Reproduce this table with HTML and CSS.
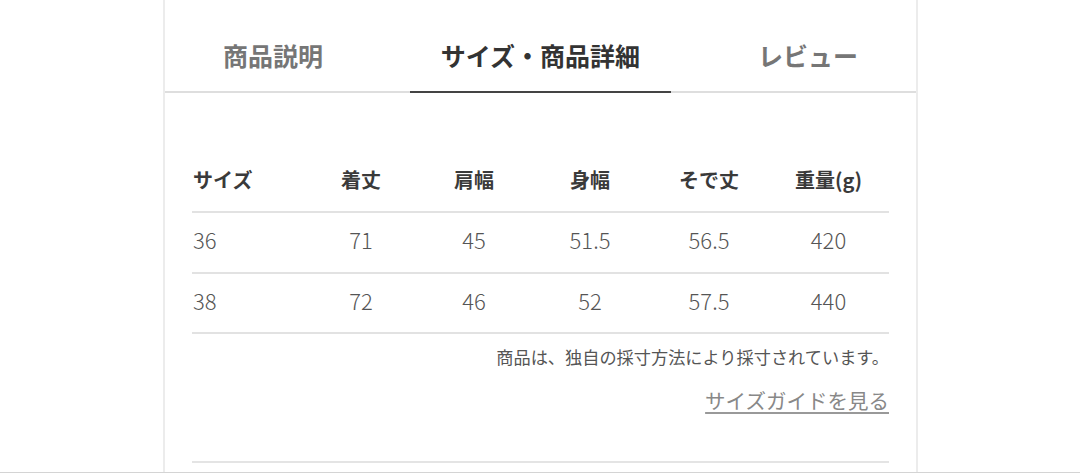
FILE: index.html
```html
<!DOCTYPE html>
<html lang="ja">
<head>
<meta charset="utf-8">
<title>サイズ・商品詳細</title>
<link rel="stylesheet" href="styles.css">
</head>
<body>
<div class="page">
  <section class="panel">
    <nav class="tabs">
      <a class="tab">商品説明</a>
      <a class="tab active">サイズ・商品詳細</a>
      <a class="tab">レビュー</a>
    </nav>
    <div class="content">
      <div class="size-table">
        <div class="row head">
          <div class="cell first">サイズ</div>
          <div class="cell">着丈</div>
          <div class="cell">肩幅</div>
          <div class="cell">身幅</div>
          <div class="cell">そで丈</div>
          <div class="cell">重量(g)</div>
        </div>
        <div class="row">
          <div class="cell first">36</div>
          <div class="cell">71</div>
          <div class="cell">45</div>
          <div class="cell">51.5</div>
          <div class="cell">56.5</div>
          <div class="cell">420</div>
        </div>
        <div class="row">
          <div class="cell first">38</div>
          <div class="cell">72</div>
          <div class="cell">46</div>
          <div class="cell">52</div>
          <div class="cell">57.5</div>
          <div class="cell">440</div>
        </div>
      </div>
      <p class="note">商品は、独自の採寸方法により採寸されています。</p>
      <p class="guide"><a class="guide-link">サイズガイドを見る</a></p>
      <div class="separator"></div>
    </div>
  </section>
  <div class="next-section"></div>
</div>
</body>
</html>
```
FILE: styles.css
```css
* {
  box-sizing: border-box;
}

html, body {
  margin: 0;
  padding: 0;
  background: #ffffff;
}

body {
  font-family: "Noto Sans CJK JP", "Noto Sans", sans-serif;
  color: #333333;
}

.page {
  width: 1080px;
  overflow: hidden;
}

.panel {
  margin-left: 163px;
  width: 755px;
  border-left: 2px solid #ececec;
  border-right: 2px solid #ececec;
}

.tabs {
  display: flex;
  justify-content: space-between;
  padding: 0 27px;
  border-bottom: 2px solid #dedede;
}

.tab {
  display: block;
  padding: 38px 31px 18px;
  font-size: 25px;
  line-height: 35px;
  font-weight: 700;
  color: #767676;
  margin-bottom: -2px;
  border-bottom: 2px solid transparent;
}

.tab.active {
  color: #333333;
  border-bottom-color: #444444;
}

.content {
  padding: 60px 27px 9px;
}

.row {
  display: grid;
  grid-template-columns: 112px 114px 112px 120px 118px 1fr;
  height: 60px;
  padding-bottom: 4px;
  align-items: center;
  border-bottom: 2px solid #e2e2e2;
}

.row + .row {
  height: 60.5px;
  padding-bottom: 6px;
}

.cell {
  text-align: center;
  font-size: 22px;
  line-height: 30px;
  font-weight: 300;
  color: #555555;
}

.cell.first {
  text-align: left;
  padding-left: 1px;
}

.row.head .cell {
  font-size: 20px;
  font-weight: 700;
  color: #3a3a3a;
}

.note {
  margin: 10px 0 0;
  text-align: right;
  font-size: 17.2px;
  line-height: 26px;
  color: #555555;
}

.guide {
  margin: 15px 0 0;
  text-align: right;
  font-size: 20.5px;
  line-height: 30px;
}

.guide-link {
  color: #888888;
  text-decoration: underline;
  text-decoration-color: #999999;
  text-decoration-thickness: 2px;
  text-underline-offset: 3px;
}

.separator {
  margin-top: 46px;
  border-top: 2px solid #e4e4e4;
}

.next-section {
  border-top: 2px solid #d4d4d4;
}
```
